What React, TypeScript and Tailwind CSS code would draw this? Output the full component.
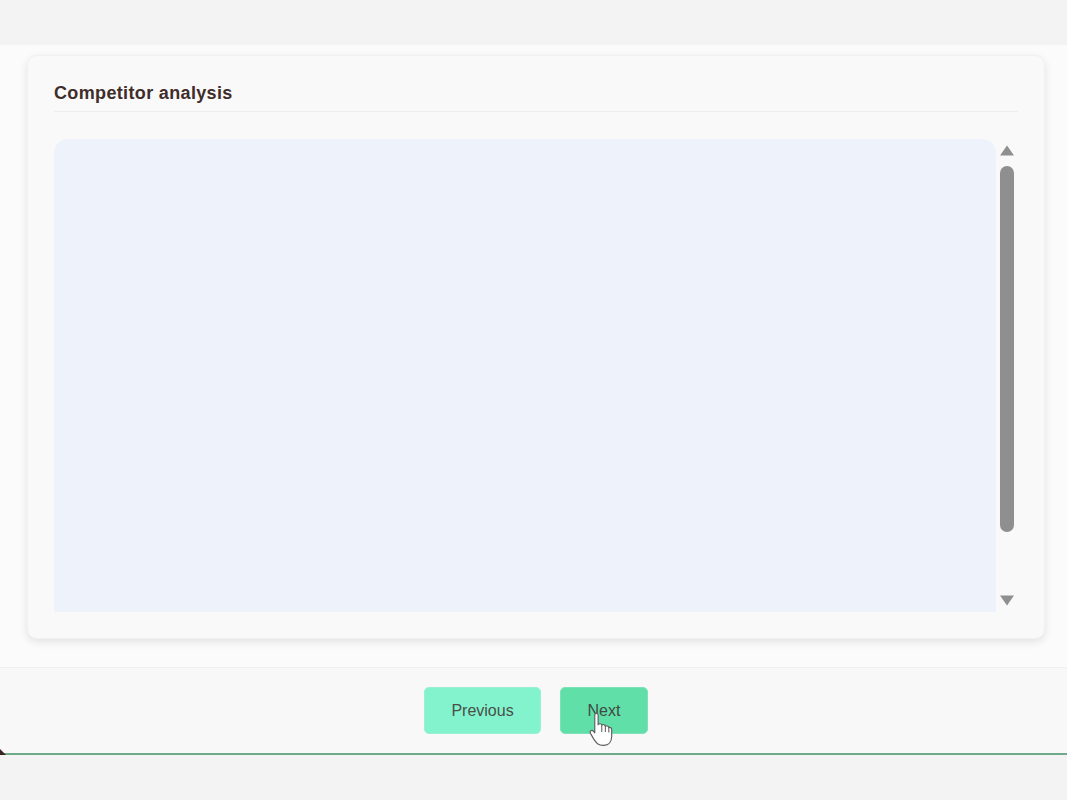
import React from 'react';

const HandCursor: React.FC = () => (
    <svg className="absolute top-[24px] left-[28px] h-[35px] w-[25px]" viewBox="0 0 26 36">
        <path
            d="M6 3 C6 0.8 9.5 0.8 9.5 3 L9.5 13 C10.5 11.5 13 11.8 13.3 13.5 C14.5 12.3 16.7 12.8 17 14.6 C18.3 13.8 20.3 14.3 20.6 16 C21.5 15.5 23.6 16 23.6 18 L23.6 25 C23.6 30 21 34.5 15 34.5 C9.5 34.5 7.5 32 5 28 L1.5 22 C0.3 19.8 3 18 4.6 19.8 L6 21.5 Z"
            fill="#ffffff"
            stroke="#5f5f5f"
            strokeWidth="1.2"
            strokeLinejoin="round"
        />
        <path d="M13.3 13.5 L13.3 20 M17 14.6 L17 20 M20.6 16 L20.6 20.5" fill="none" stroke="#5f5f5f" strokeWidth="1.1" strokeLinecap="round" />
    </svg>
);

const App: React.FC = () => {
    return (
        <div className="h-[800px] w-[1067px] overflow-hidden bg-[#f3f3f3] font-['Liberation_Sans',Arial,sans-serif]">
            <div className="h-[45px]" />

            <div className="relative flex h-[710px] flex-col border-b-2 border-b-[#6fa98a] bg-[#fbfbfb]">
                <div className="flex h-[622px] shrink-0 flex-col pt-[10px] pr-[22px] pl-[27px]">
                    <div className="flex h-[584px] flex-col rounded-[10px] border border-[#f1f1f1] bg-[#f9f9f9] px-[26px] shadow-[0_3px_8px_rgba(0,0,0,0.1)]">
                        <div className="flex h-[56px] shrink-0 items-end border-b border-[#eeeeee] pb-[8px]">
                            <h2 className="text-[18px] leading-[20px] font-bold tracking-[0.35px] text-[#3f2d2a]">Competitor analysis</h2>
                        </div>

                        <div className="mt-[27px] flex h-[473px] gap-[4px]">
                            <div className="w-[942px] rounded-t-[14px] bg-[#eef3fb]" />
                            <div className="flex w-[14px] flex-col items-center">
                                <svg className="mt-[6px] h-[11px] w-[14px]" viewBox="0 0 14 11">
                                    <path d="M7 0.5 L14 10.5 L0 10.5 Z" fill="#8f8f8f" />
                                </svg>
                                <div className="mt-[10px] h-[366px] w-[14px] rounded-[7px] bg-[#8f8f8f]" />
                                <svg className="mt-[63px] h-[11px] w-[14px]" viewBox="0 0 14 11">
                                    <path d="M0 0.5 L14 0.5 L7 10.5 Z" fill="#8f8f8f" />
                                </svg>
                            </div>
                        </div>
                    </div>
                </div>

                <div className="flex flex-1 justify-center gap-[19px] border-t border-[#efefef] bg-[#f8f8f8] pt-[19px] pl-[5px]">
                    <button className="h-[47px] w-[117px] rounded-[5px] border border-[#9af0d4] bg-[#83f3cd] text-[16px] text-[#4a4f49]">Previous</button>
                    <button className="relative h-[47px] w-[88px] rounded-[5px] border border-[#7ce3b8] bg-[#60dfa9] text-[16px] text-[#3f4a43]">
                        Next
                        <HandCursor />
                    </button>
                </div>

                {/* dark sliver at the bottom-left corner */}
                <svg className="absolute bottom-[-2px] left-0 h-[6px] w-[6px]" viewBox="0 0 6 6">
                    <path d="M0 0 L6 6 L0 6 Z" fill="#3a2420" />
                </svg>
            </div>
        </div>
    );
};

export default App;
